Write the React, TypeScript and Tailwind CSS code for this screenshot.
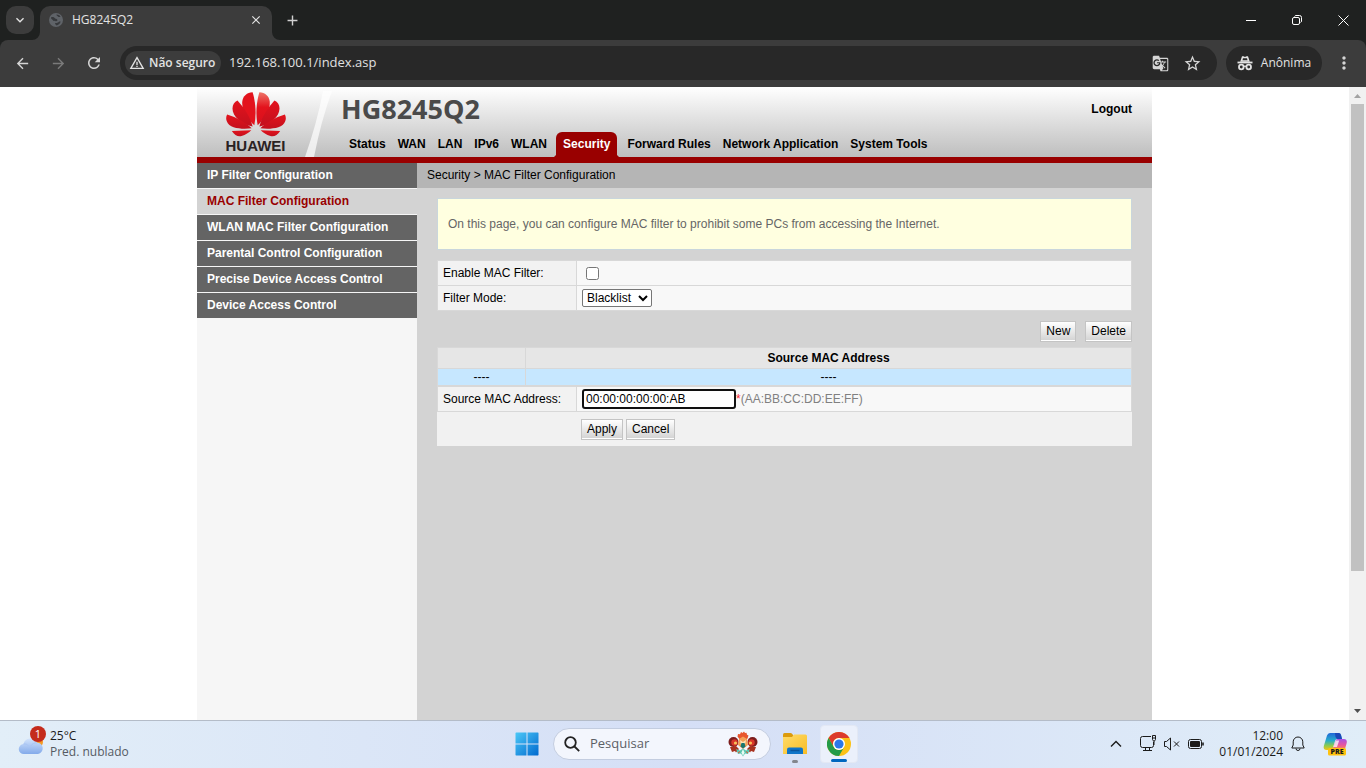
import { useState } from 'react';
import clsx from 'clsx';
import {
  MdArrowBack,
  MdArrowForward,
  MdClose,
  MdAdd,
  MdGTranslate,
  MdKeyboardArrowDown,
  MdMoreVert,
  MdRefresh,
  MdStarBorder,
  MdWarningAmber,
} from 'react-icons/md';

const navItems = [
  'Status',
  'WAN',
  'LAN',
  'IPv6',
  'WLAN',
  'Security',
  'Forward Rules',
  'Network Application',
  'System Tools',
];

const menuItems = [
  'IP Filter Configuration',
  'MAC Filter Configuration',
  'WLAN MAC Filter Configuration',
  'Parental Control Configuration',
  'Precise Device Access Control',
  'Device Access Control',
];

function GlobeIcon() {
  return (
    <svg width="14" height="14" viewBox="0 0 14 14">
      <circle cx="7" cy="7" r="7" fill="#5f6368" />
      <path d="M2 4.500c1.500-.8 3-.3 3.600.6.500.9 1.900.5 2.600 1.400.7 1-.2 1.800-1.200 1.700-1.500-.1-2.700-.1-3.300-1.200C3.200 6.200 1.800 6 2 4.500ZM7.500 1.500c1.600-.1 3.300.8 4 2.200-.9.700-2 .4-2.600-.2-.5-.6-1.600-.9-1.400-2ZM6 10.200c1-.5 2-.1 3-.7.8-.5 1.200-1.300 2.600-1-.3 2-2.100 3.700-4.200 3.900-.2-.8-1.500-1.100-1.400-2.200Z" fill="#37393c" />
    </svg>
  );
}

function IncognitoIcon() {
  return (
    <svg width="16" height="16" viewBox="0 0 16 16" fill="none" stroke="#e3e3e3">
      <path d="M3.200 6.800 5 1.300h1.500l1.500.6 1.500-.6H11l1.800 5.500Z" fill="#e3e3e3" stroke="none" />
      <path d="M6 3.200h4l.5 2H5.500Z" fill="#282828" stroke="none" />
      <path d="M.5 7.500h15" strokeWidth="1.800" />
      <circle cx="4.300" cy="12" r="2.300" strokeWidth="1.800" />
      <circle cx="11.700" cy="12" r="2.300" strokeWidth="1.800" />
      <path d="M6.500 11.600q1.500-1 3 0" strokeWidth="1.400" />
    </svg>
  );
}

function TitleBar() {
  return (
    <div className="flex h-10 shrink-0 items-end bg-[#1f2120]">
      <button
        aria-label="Search tabs"
        className="mb-1.5 ml-1.5 flex size-7 items-center justify-center rounded-[10px] bg-[#3c3c3c] text-[#e3e3e3]"
      >
        <MdKeyboardArrowDown size={16} />
      </button>
      <div className="relative ml-1.5 flex h-[34px] w-[232px] items-center rounded-t-[10px] bg-[#3c3c3c] pb-1.5 pl-[9px] pr-2">
        <svg className="absolute -left-2 bottom-0" width="8" height="8">
          <path d="M8 0v8H0A8 8 0 0 0 8 0Z" fill="#3c3c3c" />
        </svg>
        <svg className="absolute -right-2 bottom-0" width="8" height="8">
          <path d="M0 0v8h8A8 8 0 0 1 0 0Z" fill="#3c3c3c" />
        </svg>
        <GlobeIcon />
        <span className="ml-[9px] flex-1 text-[12px] text-[#e3e3e3]">HG8245Q2</span>
        <button aria-label="Close tab" className="flex size-4 items-center justify-center text-[#e3e3e3]">
          <MdClose size={14} />
        </button>
      </div>
      <button
        aria-label="New tab"
        className="mb-2.5 ml-2.5 flex size-5 items-center justify-center text-[#d0d0d0]"
      >
        <MdAdd size={17} />
      </button>
      <div className="ml-auto flex h-10 text-white">
        <button aria-label="Minimize" className="flex w-[46px] items-center justify-center">
          <svg width="10" height="10" stroke="currentColor">
            <path d="M0 5.500h10" />
          </svg>
        </button>
        <button aria-label="Restore" className="flex w-[46px] items-center justify-center">
          <svg width="10" height="10" fill="none" stroke="currentColor">
            <rect x=".5" y="2.500" width="7" height="7" rx="1.500" />
            <path d="M2.500 1.500Q3 .5 4 .5h3.500a2 2 0 0 1 2 2V6q0 1-1 1.500" />
          </svg>
        </button>
        <button aria-label="Close" className="flex w-[46px] items-center justify-center">
          <svg width="11" height="11" stroke="currentColor">
            <path d="m.5.5 10 10M10.500.5l-10 10" />
          </svg>
        </button>
      </div>
    </div>
  );
}

function Toolbar() {
  return (
    <div className="shrink-0 bg-[#1f2120]">
      <div className="flex h-[47px] items-center rounded-t-lg bg-[#3c3c3c] pb-px pl-3 pr-3 text-[#d5d5d5]">
        <button aria-label="Back" className="flex size-5 items-center justify-center">
          <MdArrowBack size={17} />
        </button>
        <button aria-label="Forward" className="ml-4 flex size-5 items-center justify-center text-[#7a7a7a]">
          <MdArrowForward size={17} />
        </button>
        <button aria-label="Reload" className="ml-4 flex size-5 items-center justify-center">
          <MdRefresh size={18} />
        </button>
        <div className="ml-4 flex h-[34px] flex-1 items-center rounded-full bg-[#282828] pl-[5px] pr-[15px]">
          <button className="flex h-6 w-24 items-center gap-1 rounded-full bg-[#3c3c3c] pl-1 text-[12px] font-semibold text-[#e3e3e3]">
            <MdWarningAmber size={16} />
            Não seguro
          </button>
          <input
            aria-label="Address"
            defaultValue="192.168.100.1/index.asp"
            className="ml-2 min-w-0 flex-1 bg-transparent text-[13px] text-[#e0e0e0] outline-none"
          />
          <button aria-label="Translate">
            <MdGTranslate size={17} />
          </button>
          <button aria-label="Bookmark" className="ml-3.5">
            <MdStarBorder size={19} />
          </button>
        </div>
        <button className="ml-[9px] flex h-[34px] w-24 items-center justify-center gap-2 rounded-full bg-[#282828] text-[12px] text-[#e3e3e3]">
          <IncognitoIcon />
          Anônima
        </button>
        <button aria-label="Menu" className="ml-3">
          <MdMoreVert size={20} />
        </button>
      </div>
    </div>
  );
}

function HuaweiPetals() {
  return (
    <svg width="60" height="45" viewBox="0 0 178 134">
      <defs>
        <linearGradient id="petalInner" x1="0" y1="0" x2="0" y2="1">
          <stop offset="0" stopColor="#ee7468" />
          <stop offset=".45" stopColor="#e3131d" />
          <stop offset="1" stopColor="#d90f1c" />
        </linearGradient>
        <linearGradient id="petalOuter" x1="0" y1="0" x2="0" y2="1">
          <stop offset="0" stopColor="#e3131d" />
          <stop offset="1" stopColor="#c3101d" />
        </linearGradient>
        <g id="petals" fill="url(#petalOuter)">
          <path d="M79 103C46 96 19 74 19 49c0-12 6-20 15-24 18 20 38 48 45 78Z" />
          <path d="M76 108C50 111 10 110 2 87c-3-8-2-14 1-20 28 8 58 26 73 41Z" />
          <path d="m75 114-58 2c8 12 18 18 29 15 12-3 22-10 29-17Z" />
        </g>
      </defs>
      <path d="M84 99C66 82 46 54 48 29 50 12 62 2 79 1c10 34 11 68 5 98Z" fill="#e3131d" />
      <path d="M94 99c18-17 38-45 36-70C128 12 116 2 99 1 89 35 88 69 94 99Z" fill="url(#petalInner)" />
      <use href="#petals" />
      <use href="#petals" transform="matrix(-1 0 0 1 178 0)" />
    </svg>
  );
}

function Header() {
  return (
    <header className="flex h-[76px] border-b-[6px] border-[#990000] bg-linear-to-b from-white to-[#bebebe]">
      <div className="relative w-36 shrink-0">
        <svg className="absolute inset-0" width="144" height="70" viewBox="0 0 144 70">
          <path d="M126 4h9Q124 34 117 70h-9Q120 36 126 4Z" fill="#fff" fillOpacity=".7" />
        </svg>
        <div className="relative ml-7 flex w-[61px] flex-col items-center pt-[5px]">
          <HuaweiPetals />
          <span className="mt-0.5 text-[15px] leading-[14px] font-bold text-[#2a2223]">HUAWEI</span>
        </div>
      </div>
      <div className="flex min-w-0 flex-1 flex-col justify-between">
        <div className="flex items-center justify-between pr-5">
          <h1 className="font-['Open_Sans',sans-serif] text-[27px] leading-[43px] font-bold text-[#4a4a4a]">
            HG8245Q2
          </h1>
          <a href="#logout" className="font-bold">
            Logout
          </a>
        </div>
        <nav className="flex pl-0.5">
          {navItems.map((item) => (
            <a
              key={item}
              href="#"
              className={clsx(
                'relative h-[25px] whitespace-nowrap leading-6 font-bold',
                item === 'Security' ? 'mr-1 ml-[3px] rounded-t-md bg-[#990000] px-[7px] text-white' : 'px-1.5'
              )}
            >
              {item}
              {item === 'Security' && (
                <>
                  <svg className="absolute bottom-0 -left-0.5" width="2" height="2">
                    <path d="M2 0v2H0Z" fill="#990000" />
                  </svg>
                  <svg className="absolute -right-0.5 bottom-0" width="2" height="2">
                    <path d="M0 0v2h2Z" fill="#990000" />
                  </svg>
                </>
              )}
            </a>
          ))}
        </nav>
      </div>
    </header>
  );
}

function Sidebar() {
  return (
    <aside className="w-[220px] shrink-0 bg-[#f6f6f6]">
      {menuItems.map((item) => (
        <a
          key={item}
          href="#"
          className={clsx(
            'block h-[26px] border-b border-[#f6f6f6] pl-2.5 leading-6 font-bold',
            item === 'MAC Filter Configuration' ? 'bg-[#d3d3d3] text-[#990000]' : 'bg-[#646464] text-white'
          )}
        >
          {item}
        </a>
      ))}
    </aside>
  );
}

const buttonStyle =
  'h-[21px] border border-[#c4c4c4] bg-linear-to-b from-white to-[#d2d2d2] px-[5px] leading-[19px] shadow-[inset_0_-1px_0_#fff]';

const labelStyle = 'w-[139px] border-r border-[#d8d8d8] bg-[#f2f2f2] pl-[5px] leading-6';

function MacFilter() {
  const [mode, setMode] = useState('Blacklist');
  const [address, setAddress] = useState('00:00:00:00:00:AB');

  return (
    <main className="min-w-0 flex-1 bg-[#d3d3d3]">
      <div className="h-[25px] bg-[#b5b5b5] pl-2.5 leading-6">Security &gt; MAC Filter Configuration</div>
      <div className="px-5 pt-2.5">
        <p className="border border-[#c9d6dc] bg-[#ffffe0] px-2.5 leading-[50px] text-[#666]">
          On this page, you can configure MAC filter to prohibit some PCs from accessing the Internet.
        </p>

        <div className="mt-2.5 border border-b-0 border-[#d8d8d8] bg-[#f8f8f8]">
          <div className="flex h-[25px] border-b border-[#d8d8d8]">
            <label htmlFor="enable" className={labelStyle}>
              Enable MAC Filter:
            </label>
            <input id="enable" type="checkbox" className="mt-1.5 ml-[9px] size-[13px]" />
          </div>
          <div className="flex h-[25px] border-b border-[#d8d8d8]">
            <label htmlFor="mode" className={labelStyle}>
              Filter Mode:
            </label>
            <select
              id="mode"
              value={mode}
              onChange={(e) => setMode(e.target.value)}
              className="mt-[3px] ml-[5px] h-[18px] w-[70px] rounded-xs border border-[#767676] bg-white leading-4"
            >
              <option>Blacklist</option>
              <option>Whitelist</option>
            </select>
          </div>
        </div>

        <div className="mt-2.5 mb-[5px] flex justify-end gap-[9px]">
          <button className={buttonStyle}>New</button>
          <button className={buttonStyle}>Delete</button>
        </div>

        <table className="w-full table-fixed border-separate border-spacing-0 border-t border-l border-[#d8d8d8] text-center">
          <thead>
            <tr className="h-[21px] bg-[#e6e6e6] leading-5">
              <td className="w-[88px] border-r border-b border-[#d8d8d8]"></td>
              <th className="border-r border-b border-[#d8d8d8]">Source MAC Address</th>
            </tr>
          </thead>
          <tbody>
            <tr className="bg-[#c6e7ff] leading-4">
              <td className="border-r border-b border-[#d8d8d8]">----</td>
              <td className="border-r border-b border-[#d8d8d8]">----</td>
            </tr>
          </tbody>
        </table>

        <div className="flex h-[26px] border border-[#d8d8d8] bg-[#f8f8f8]">
          <label htmlFor="mac" className={labelStyle}>
            Source MAC Address:
          </label>
          <input
            id="mac"
            value={address}
            onChange={(e) => setAddress(e.target.value)}
            className="mt-0.5 ml-[5px] h-5 w-[154px] rounded-[3px] border-2 border-[#101010] bg-white px-0.5 outline-none"
          />
          <span className="leading-6 text-[#808080]">
            <span className="text-red-500">*</span>(AA:BB:CC:DD:EE:FF)
          </span>
        </div>
        <div className="flex h-[34px] gap-[3px] bg-[#f1f1f1] pt-[7px] pl-36">
          <button className={buttonStyle}>Apply</button>
          <button className={buttonStyle}>Cancel</button>
        </div>
      </div>
    </main>
  );
}

function Scrollbar() {
  return (
    <div className="flex w-[17px] shrink-0 flex-col items-center bg-[#f1f1f1]">
      <svg width="17" height="17">
        <path d="M5 11l3.500-4 3.500 4Z" fill="#a3a3a3" />
      </svg>
      <div className="flex w-[13px] flex-1 flex-col">
        <div className="h-[78%] bg-[#c1c1c1]" />
      </div>
      <svg width="17" height="17">
        <path d="M5 6l3.500 4L12 6Z" fill="#505050" />
      </svg>
    </div>
  );
}

function WeatherIcon() {
  return (
    <svg width="30" height="32" viewBox="0 0 30 32">
      <defs>
        <linearGradient id="cloud" x1="0" y1="0" x2="0" y2="1">
          <stop offset="0" stopColor="#d3e4fc" />
          <stop offset="1" stopColor="#83aaea" />
        </linearGradient>
      </defs>
      <circle cx="19" cy="17" r="6" fill="#f59a23" />
      <path d="M6 29a5 5 0 0 1-.5-10 7.200 7.200 0 0 1 13.500-1.500A5.800 5.800 0 0 1 20 29Z" fill="url(#cloud)" />
      <path d="M5.500 19c2-.3 4 .4 5 2M12 22c2-3.500 5-4.500 7-4" stroke="#a9c5f4" fill="none" />
      <circle cx="20" cy="9" r="8" fill="#c42b1c" />
    </svg>
  );
}

function WindowsIcon() {
  return (
    <svg width="24" height="24" viewBox="0 0 24 24">
      <defs>
        <linearGradient id="win" x1="0" y1="0" x2="1" y2="1">
          <stop offset="0" stopColor="#4cc8f7" />
          <stop offset="1" stopColor="#0069cf" />
        </linearGradient>
      </defs>
      <path d="M1 .5h10.500V11.500H.5V1ZM12.500.5H23l.5.500v10.500h-11ZM.5 12.500h11v11H1L.5 23ZM12.500 12.500h11V23l-.5.500H12.500Z" fill="url(#win)" />
    </svg>
  );
}

// folk-art bird shown at the end of the search box
function FolkIcon() {
  return (
    <svg width="30" height="26" viewBox="0 0 30 26">
      <circle cx="5.500" cy="11" r="5" fill="#7c1d1d" />
      <circle cx="24.500" cy="11" r="5" fill="#7c1d1d" />
      <circle cx="6.500" cy="11.500" r="3.200" fill="#d8372a" />
      <circle cx="23.500" cy="11.500" r="3.200" fill="#d8372a" />
      <circle cx="7.500" cy="12" r="1.600" fill="#f7c25a" />
      <circle cx="22.500" cy="12" r="1.600" fill="#f7c25a" />
      <path d="M9.500 5.500 10 3l2 .2L13 1l1.500 1L16 .5 17 2l1.500-.3.500 2 1.500.8-1 3-2 2h-5Z" fill="#e8552d" />
      <path d="m11 8 4-2.500L19 8l1 6-5 4-5-4Z" fill="#f3a057" />
      <path d="m12 9 3 2 3-2-1 5h-4Z" fill="#fbe3b8" />
      <path d="M13.500 12h3l1 3.500-2.500 2-2.500-2Z" fill="#19766f" />
      <path d="m2 16 6-1 3 3-3 3.500-1-1.500-3 1Z" fill="#a8321f" />
      <path d="m28 16-6-1-3 3 3 3.500 1-1.500 3 1Z" fill="#a8321f" />
      <path d="m8 18 4 1.500 3-2 3 2 4-1.500-2 5-3-.5-2 3-2-3-3 .5Z" fill="#59c5ae" />
      <path d="m15 18 1.500 3.500L15 25l-1.500-3.500Z" fill="#e9fbf4" />
      <path d="m10 22 2-1.500M20 22l-2-1.500" stroke="#e8552d" />
    </svg>
  );
}

function FolderIcon() {
  return (
    <svg width="24" height="24" viewBox="0 0 24 24">
      <defs>
        <linearGradient id="folder" x1="0" y1="0" x2="1" y2="1">
          <stop offset="0" stopColor="#ffdc6a" />
          <stop offset="1" stopColor="#f8bc25" />
        </linearGradient>
      </defs>
      <path d="M0 2.500Q0 1 1.500 1h6Q9 1 10 3l1 2H0Z" fill="#dc9b0c" />
      <path d="M0 5h9l2-2.500h11.500q1.500 0 1.500 1.500v18H0Z" fill="url(#folder)" />
      <path d="M4 22v-4.500Q4 15.500 6 15.500h12q2 0 2 2V22Z" fill="#0f75c9" />
      <path d="M7.500 18.500h9" stroke="#0a559c" strokeWidth="1.500" />
    </svg>
  );
}

function ChromeIcon() {
  return (
    <svg width="24" height="24" viewBox="0 0 24 24">
      <circle cx="12" cy="12" r="12" fill="#fbc116" />
      <path d="M1.600 6A12 12 0 0 1 22.400 6H12a6 6 0 0 0-5.200 9Z" fill="#dc3a2c" />
      <path d="M1.600 6A12 12 0 0 0 12 24l5.200-9a6 6 0 0 1-10.400 0Z" fill="#249b48" />
      <circle cx="12" cy="12" r="6" fill="#fff" />
      <circle cx="12" cy="12" r="4.600" fill="#2a78e8" />
    </svg>
  );
}

function CopilotIcon() {
  return (
    <svg width="24" height="24" viewBox="0 0 24 24">
      <defs>
        <linearGradient id="copilotA" x1="0" y1="0" x2="0" y2="1">
          <stop offset="0" stopColor="#2167d8" />
          <stop offset=".45" stopColor="#27aecb" />
          <stop offset=".75" stopColor="#8fcb4a" />
          <stop offset="1" stopColor="#f2c417" />
        </linearGradient>
        <linearGradient id="copilotB" x1="0" y1="0" x2="0" y2="1">
          <stop offset="0" stopColor="#a653e6" />
          <stop offset=".6" stopColor="#e8569c" />
          <stop offset="1" stopColor="#f98a52" />
        </linearGradient>
      </defs>
      <path d="M7 1h8.500Q17.500 1 18 3l1 4h-4.500Q12.500 7 12 9l-2 6.500Q9.500 18 7 18H3.500Q0 18 .8 14L4 3.500Q4.800 1 7 1Z" fill="url(#copilotA)" />
      <path d="M12 1h3.500Q17.500 1 18 3l1 4h-4.500Q13.500 7 12.500 5Z" fill="#1b48b8" />
      <path d="M15 7h6q3.500.3 2.700 4L22 17H9l1.500-2L12.500 9Q13 7 15 7Z" fill="url(#copilotB)" />
      <path d="M12.700 8.500h3.500L14 15h-3.500Z" fill="#fff" fillOpacity=".75" />
      <rect x="5" y="16" width="18" height="7.500" rx="1.500" fill="#ffc20e" />
    </svg>
  );
}

function Taskbar() {
  return (
    <footer className="grid h-12 shrink-0 grid-cols-[1fr_auto_1fr] items-center border-t border-[#b4bcc8] bg-linear-to-r from-[#e2eef8] via-[#d5dff6] to-[#e0edf8] pb-0.5 text-[12px] text-[#1b1b1b]">
      <div className="flex items-center gap-0.5 pl-[18px]">
        <div className="relative mb-1.5">
          <WeatherIcon />
          <span className="absolute top-px left-3 w-4 text-center text-[11px] leading-4 text-white">1</span>
        </div>
        <div className="leading-4">
          <div>25°C</div>
          <div className="text-[#555b63]">Pred. nublado</div>
        </div>
      </div>

      <div className="flex items-center">
        <button aria-label="Start" className="flex w-11 justify-center">
          <WindowsIcon />
        </button>
        <div className="mr-0.5 ml-1 flex h-8 w-[218px] items-center rounded-full border border-[#c3cde0] bg-[#f3f6fd] pr-3 pl-2.5">
          <svg width="16" height="16" viewBox="0 0 16 16" fill="none" stroke="#222" strokeWidth="1.800">
            <circle cx="6.500" cy="6.500" r="5.300" />
            <path d="m10.500 10.500 4.700 4.700" />
          </svg>
          <input
            aria-label="Pesquisar"
            placeholder="Pesquisar"
            className="ml-2.5 min-w-0 flex-1 bg-transparent text-[13px] outline-none placeholder:text-[#5c5f66]"
          />
          <FolkIcon />
        </div>
        <button aria-label="File Explorer" className="relative flex w-11 justify-center">
          <FolderIcon />
          <span className="absolute -bottom-[7px] h-[3px] w-1.5 rounded-full bg-[#83868d]" />
        </button>
        <button aria-label="Chrome" className="flex w-11 justify-center">
          <span className="relative flex h-[38px] w-[38px] items-center justify-center rounded-sm border border-[#e3e8f4] bg-[#ebf0fb]">
            <ChromeIcon />
            <span className="absolute bottom-0 h-[3px] w-4 rounded-full bg-[#0067c0]" />
          </span>
        </button>
      </div>

      <div className="flex items-center justify-end pr-[19px]">
        <svg width="12" height="8" fill="none" stroke="#1b1b1b" strokeWidth="1.400">
          <path d="m1 6.500 5-5 5 5" />
        </svg>
        <svg className="ml-[18px]" width="17" height="17" fill="none" stroke="#1b1b1b">
          <path d="M11 1.500H2.500a2 2 0 0 0-2 2v7a2 2 0 0 0 2 2h9a2 2 0 0 0 2-2V7M5.500 12.500v3M9.500 12.500v3M3 15.500h9M12.500.5h3v4l-1 1.500h-1l-1-1.500ZM12 3h4M14 6v4" />
        </svg>
        <svg className="ml-[7px]" width="16" height="14" fill="none" stroke="#1b1b1b">
          <path d="M.5 4.500h2l4-3.500v12l-4-3.500h-2ZM10 4.500l5 5M15 4.500l-5 5" />
        </svg>
        <svg className="ml-2" width="17" height="12" fill="none" stroke="#1b1b1b">
          <rect x=".5" y="1.500" width="13" height="9" rx="2" />
          <rect x="2" y="3" width="10" height="6" rx="1" fill="#1b1b1b" stroke="none" />
          <path d="M15 4.500v3" strokeWidth="1.600" />
        </svg>
        <div className="ml-3.5 text-right leading-4">
          <div>12:00</div>
          <div>01/01/2024</div>
        </div>
        <svg className="ml-2" width="14" height="16" fill="none" stroke="#1b1b1b">
          <path d="M7 1a4.800 4.800 0 0 0-4.800 4.800V9L.8 12h12.400l-1.400-3V5.800A4.800 4.800 0 0 0 7 1ZM5 12.500a2 2 0 0 0 4 0" />
        </svg>
        <div className="relative ml-[18px]">
          <CopilotIcon />
          <span className="absolute right-px bottom-px w-[18px] text-center text-[7px] leading-[7px] font-extrabold">
            PRE
          </span>
        </div>
      </div>
    </footer>
  );
}

export default function App() {
  return (
    <div className="flex h-screen flex-col overflow-hidden font-['Open_Sans',sans-serif]">
      <TitleBar />
      <Toolbar />
      <div className="flex min-h-0 flex-1 bg-white">
        <div className="min-w-0 flex-1 overflow-hidden">
          <div className="mx-auto flex h-full max-w-[955px] flex-col font-['Liberation_Sans',Arial,sans-serif] text-[12px] text-black">
            <Header />
            <div className="flex min-h-0 flex-1">
              <Sidebar />
              <MacFilter />
            </div>
          </div>
        </div>
        <Scrollbar />
      </div>
      <Taskbar />
    </div>
  );
}
